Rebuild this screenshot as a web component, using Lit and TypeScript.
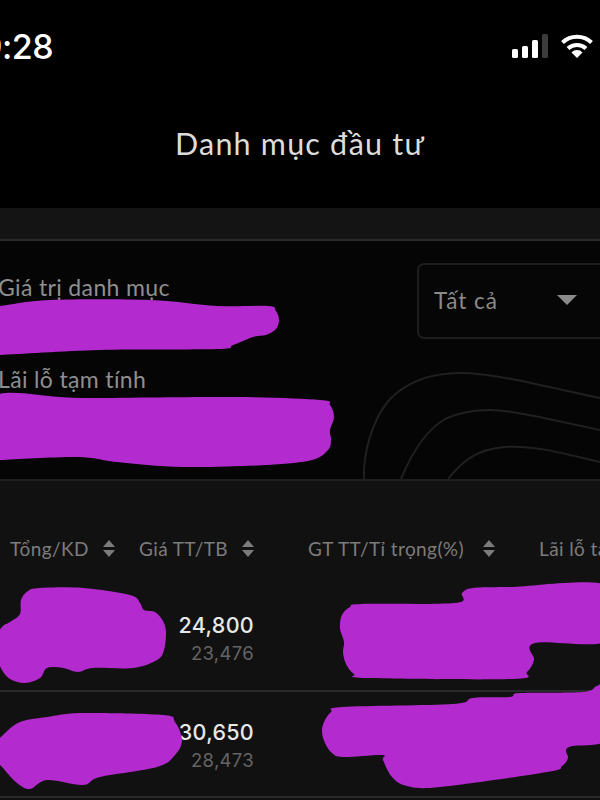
import { LitElement, html, css, svg } from "lit";
import { customElement } from "lit/decorators.js";

type P = [number, number];

// Closed Catmull-Rom spline through the hand-traced outline of a redaction scribble.
function blob(pts: P[]): string {
  const n = pts.length;
  let d = `M${pts[0][0]} ${pts[0][1]}`;
  for (let i = 0; i < n; i++) {
    const p0 = pts[(i - 1 + n) % n], p1 = pts[i], p2 = pts[(i + 1) % n], p3 = pts[(i + 2) % n];
    const c1: P = [p1[0] + (p2[0] - p0[0]) / 6, p1[1] + (p2[1] - p0[1]) / 6];
    const c2: P = [p2[0] - (p3[0] - p1[0]) / 6, p2[1] - (p3[1] - p1[1]) / 6];
    d += `C${c1[0].toFixed(1)} ${c1[1].toFixed(1)} ${c2[0].toFixed(1)} ${c2[1].toFixed(1)} ${p2[0]} ${p2[1]}`;
  }
  return d + "Z";
}

const SCRIBBLES: P[][] = [
  [[-8,306],[0,306],[50,300],[150,300],[217,306],[268,306],[276,311],[279,320],[276,329],[266,335],[253,337],[233,345],[217,349],[100,350],[0,355],[-8,355]],
  [[-8,397],[83,398],[233,397],[320,400],[330,405],[334,417],[330,430],[331,440],[328,450],[312,460],[267,465],[183,467],[117,462],[77,457],[0,460],[-8,460]],
  [[20,614],[21,600],[28,591],[40,588],[83,588],[130,595],[140,603],[144,610],[155,612],[163,621],[166,632],[164,650],[157,660],[133,668],[93,668],[78,672],[63,668],[47,668],[40,678],[25,683],[10,679],[2,670],[-1,660],[-1,634],[3,626],[10,622]],
  [[-2,743],[3,735],[20,722],[47,717],[83,713],[163,715],[175,722],[182,740],[175,755],[157,767],[100,777],[83,785],[47,780],[30,789],[17,783],[3,768],[-2,760]],
  [[340,628],[342,615],[350,607],[362,604],[455,603],[462,593],[473,588],[510,587],[610,586],[610,640],[535,643],[534,660],[527,672],[513,679],[367,678],[354,674],[346,664],[343,652],[344,642]],
  [[322,732],[324,722],[331,712],[343,707],[453,704],[473,698],[510,697],[520,693],[583,692],[597,686],[610,684],[610,738],[569,747],[568,758],[562,766],[547,772],[440,787],[407,786],[392,777],[383,760],[382,755],[343,757],[332,753],[325,743]],
];

@customElement("app-root")
export class AppRoot extends LitElement {
  static styles = css`
    :host { display: block; width: 600px; height: 800px; }
    * { box-sizing: border-box; }
    .page {
      position: relative; width: 600px; height: 800px; overflow: hidden;
      background: #000; display: flex; flex-direction: column;
      font-family: Lato, "Noto Sans", sans-serif; color: #8a8a8a;
    }
    .status { height: 94px; flex: none; display: flex; justify-content: space-between; align-items: center; padding: 0 7px 0 0; }
    .time { font: 500 34px/1 Inter, sans-serif; color: #fff; margin-left: -19px; letter-spacing: -0.5px; }
    .icons { display: flex; align-items: flex-end; gap: 13px; margin-top: -3px; }
    .title { height: 114px; flex: none; text-align: center; font-size: 30.5px; line-height: 98px; color: #dcdcdc; letter-spacing: 1.2px; }
    .band { height: 33px; flex: none; background: #141414; border-bottom: 2px solid #2a2a2a; }
    .summary {
      position: relative; height: 240px; flex: none; background: #050505;
      border-bottom: 2px solid #1f1f1f; display: flex; justify-content: space-between;
      padding: 22px 0 0 0;
    }
    .labels { display: flex; flex-direction: column; gap: 64px; margin-left: -2px; padding-top: 10px; }
    .label { font-size: 23px; line-height: 28px; color: #8f8f8f; letter-spacing: 0.35px; }
    .select {
      width: 200px; height: 76px; margin-right: -17px; border: 2px solid #1d1d1d; border-radius: 7px;
      display: flex; align-items: center; justify-content: space-between; padding: 0 38px 2px 15px;
      font-size: 22.5px; color: #8a8a8a; letter-spacing: 1px; background: #060606; position: relative; z-index: 1;
    }
    .caret { width: 0; height: 0; border-left: 10px solid transparent; border-right: 10px solid transparent; border-top: 10px solid #8a8a8a; }
    .contours { position: absolute; right: 0; bottom: 0; width: 240px; height: 110px; }
    .table { flex: 1; background: #111; }
    .grid { display: grid; grid-template-columns: 129px 125px 241px 105px; }
    .head { height: 104px; align-items: center; padding-top: 31px; font-size: 19px; color: #7c7c7c; letter-spacing: 0.4px; }
    .th { display: flex; align-items: center; justify-content: space-between; white-space: nowrap; }
    .th.first { padding-left: 10px; padding-right: 14px; }
    .th.second { padding-left: 10px; }
    .th.third { padding-left: 54px; }
    .th.fourth { padding-left: 44px; }
    .sort { display: flex; flex-direction: column; gap: 3px; }
    .sort i { display: block; width: 0; height: 0; border-left: 6.5px solid transparent; border-right: 6.5px solid transparent; }
    .sort i.up { border-bottom: 7px solid #7c7c7c; }
    .sort i.down { border-top: 7px solid #7c7c7c; }
    .row { height: 107px; padding-top: 2px; border-bottom: 2px solid #2a2a2a; align-items: center; }
    .row.last { height: 106px; }
    .price { grid-column: 2; text-align: right; }
    .now { font: 500 21.5px/28px Inter, sans-serif; color: #e8e8e8; letter-spacing: 0.3px; }
    .avg { font: 400 18.5px/26px Inter, sans-serif; color: #646464; letter-spacing: 0.3px; margin-top: 1px; }
    .scribbles { position: absolute; inset: 0; width: 600px; height: 800px; }
    .scribbles path { fill: #b32bce; }
  `;

  private sort() {
    return html`<span class="sort"><i class="up"></i><i class="down"></i></span>`;
  }

  private row(now: string, avg: string, last = false) {
    return html`<div class="grid row ${last ? "last" : ""}">
      <div class="price"><div class="now">${now}</div><div class="avg">${avg}</div></div>
    </div>`;
  }

  render() {
    return html`<div class="page">
      <div class="status">
        <div class="time">9:28</div>
        <div class="icons">
          <svg width="36" height="24" viewBox="0 0 36 24">
            <rect x="0" y="15" width="6" height="9" rx="1.5" fill="#fff"/>
            <rect x="10" y="12" width="6" height="12" rx="1.5" fill="#fff"/>
            <rect x="20" y="6" width="6" height="18" rx="1.5" fill="#fff"/>
            <rect x="30" y="0" width="6" height="24" rx="1.5" fill="#3c3c3c"/>
          </svg>
          <svg width="32" height="24" viewBox="0 0 32 24" fill="none" stroke="#fff" stroke-width="4">
            <path d="M1.5 8.5A21 21 0 0 1 30.5 8.5"/>
            <path d="M7 14.5A13 13 0 0 1 25 14.5"/>
            <path d="M16 24L10.5 18.5A7.5 7.5 0 0 1 21.5 18.5Z" fill="#fff" stroke="none"/>
          </svg>
        </div>
      </div>
      <div class="title">Danh mục đầu tư</div>
      <div class="band"></div>
      <div class="summary">
        <svg class="contours" viewBox="0 0 240 110" fill="none" stroke="#202020" stroke-width="2">
          <path d="M4 110C3 85 12 50 30 30C50 10 75 4 100 4C125 4 150 9 180 16C200 20 220 25 240 29"/>
          <path d="M41 110C50 88 65 62 85 50C100 43 115 41 130 41C150 41 190 50 240 61"/>
          <path d="M88 110C100 95 115 80 145 78C175 76 205 85 240 93"/>
        </svg>
        <div class="labels">
          <div class="label">Giá trị danh mục</div>
          <div class="label">Lãi lỗ tạm tính</div>
        </div>
        <div class="select"><span>Tất cả</span><span class="caret"></span></div>
      </div>
      <div class="table">
        <div class="grid head">
          <div class="th first"><span>Tổng/KD</span>${this.sort()}</div>
          <div class="th second"><span>Giá TT/TB</span>${this.sort()}</div>
          <div class="th third"><span>GT TT/Tỉ trọng(%)</span>${this.sort()}</div>
          <div class="th fourth"><span>Lãi lỗ tạm tính</span></div>
        </div>
        ${this.row("24,800", "23,476")}
        ${this.row("30,650", "28,473", true)}
      </div>
      <svg class="scribbles" viewBox="0 0 600 800">
        ${SCRIBBLES.map((s) => svg`<path d=${blob(s)}></path>`)}
      </svg>
    </div>`;
  }
}
